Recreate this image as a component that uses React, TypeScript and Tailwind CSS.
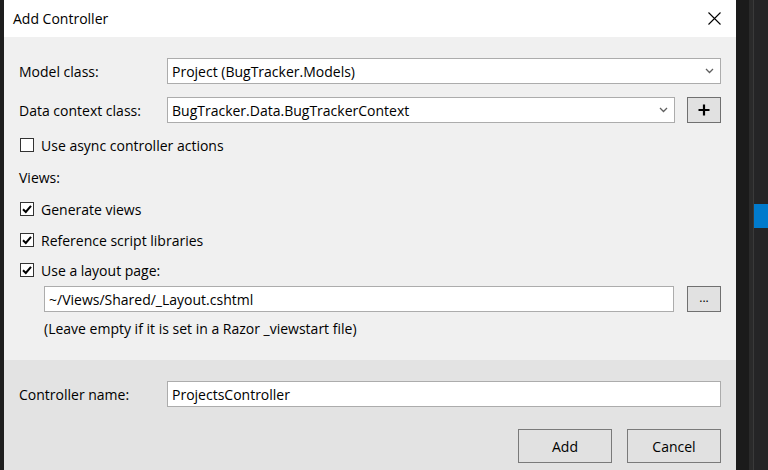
import React from 'react';

const font = { fontFamily: '"Open Sans", "Noto Sans", sans-serif' };

const Chevron: React.FC = () => (
  <svg width="9" height="6" viewBox="0 0 9 6" className="shrink-0">
    <polyline points="1,1 4.5,4.5 8,1" fill="none" stroke="#606060" strokeWidth="1.3" />
  </svg>
);

const Check: React.FC<{ checked?: boolean; label: string }> = ({ checked, label }) => (
  <div className="flex items-center h-5 ml-[1px]">
    <div className="w-[14px] h-[14px] border border-[#333333] bg-white flex items-center justify-center">
      {checked && (
        <svg width="12" height="12" viewBox="0 0 12 12">
          <polyline points="2,6.2 4.8,9 10,2.8" fill="none" stroke="#000" strokeWidth="2" />
        </svg>
      )}
    </div>
    <span className="ml-[7px]">{label}</span>
  </div>
);

const Field: React.FC<{ value: string; select?: boolean; className?: string }> = ({ value, select, className }) => (
  <div className={`h-[26px] bg-white border border-[#acacac] flex items-center pl-[4px] pr-[6px] ${className ?? ''}`}>
    <span className="flex-1 truncate">{value}</span>
    {select && <Chevron />}
  </div>
);

const SmallButton: React.FC<{ children: React.ReactNode }> = ({ children }) => (
  <div className="w-[34px] h-[26px] bg-[#e1e1e1] border border-[#707070] flex items-center justify-center shrink-0">
    {children}
  </div>
);

const App: React.FC = () => {
  return (
    <div className="w-[768px] h-[470px] flex overflow-hidden text-[14px] text-black" style={font}>
      {/* editor edge, left */}
      <div className="w-[4px] bg-[#1e1e1e]" />

      {/* Dialog */}
      <div className="w-[732px] flex flex-col">
        <div className="h-[37px] bg-white flex items-center justify-between pl-[9px] pr-[15px]">
          <span className="text-[14px]">Add Controller</span>
          <svg width="13" height="13" viewBox="0 0 13 13">
            <path d="M0.5 0.5 L12.5 12.5 M12.5 0.5 L0.5 12.5" stroke="#000" strokeWidth="1.1" />
          </svg>
        </div>

        <div className="h-[323px] bg-[#f0f0f0] px-[15px] pt-[21px] flex flex-col">
          <div className="flex items-center">
            <span className="w-[148px] shrink-0">Model class:</span>
            <Field value="Project (BugTracker.Models)" select className="flex-1" />
          </div>
          <div className="flex items-center mt-[13px]">
            <span className="w-[148px] shrink-0">Data context class:</span>
            <Field value="BugTracker.Data.BugTrackerContext" select className="flex-1" />
            <div className="ml-[12px]">
              <SmallButton>
                <svg width="14" height="14" viewBox="0 0 14 14">
                  <path d="M7 1.5 V12.5 M1.5 7 H12.5" stroke="#000" strokeWidth="2.2" />
                </svg>
              </SmallButton>
            </div>
          </div>

          <div className="mt-[12px]">
            <Check label="Use async controller actions" />
          </div>
          <div className="mt-[12px] h-5 flex items-center">Views:</div>
          <div className="mt-[12px]">
            <Check checked label="Generate views" />
          </div>
          <div className="mt-[11px]">
            <Check checked label="Reference script libraries" />
          </div>
          <div className="mt-[10px]">
            <Check checked label="Use a layout page:" />
          </div>

          <div className="flex items-center mt-[6px] pl-[25px]">
            <Field value="~/Views/Shared/_Layout.cshtml" className="flex-1" />
            <div className="ml-[13px]">
              <SmallButton>
                <span className="text-[12px] leading-none -mt-[2px]">...</span>
              </SmallButton>
            </div>
          </div>
          <div className="mt-[6px] pl-[25px] h-5 flex items-center">
            (Leave empty if it is set in a Razor _viewstart file)
          </div>
        </div>

        <div className="flex-1 bg-[#e3e3e3] px-[15px] pt-[21px] flex flex-col">
          <div className="flex items-center">
            <span className="w-[148px] shrink-0">Controller name:</span>
            <Field value="ProjectsController" className="flex-1" />
          </div>
          <div className="flex justify-end gap-[15px] mt-[22px]">
            <div className="w-[94px] h-[34px] bg-[#e1e1e1] border border-[#7a7a7a] flex items-center justify-center">Add</div>
            <div className="w-[94px] h-[34px] bg-[#e1e1e1] border border-[#7a7a7a] flex items-center justify-center">Cancel</div>
          </div>
        </div>
      </div>

      {/* editor edge, right */}
      <div className="w-[13px] bg-[#1b1b1b]" />
      <div className="w-[5px] bg-[#2a2a2a] border-r border-[#3a3a3a]" />
      <div className="flex-1 bg-[#252526] pt-[204px]">
        <div className="h-[24px] bg-[#007acc]" />
      </div>
    </div>
  );
};

export default App;
